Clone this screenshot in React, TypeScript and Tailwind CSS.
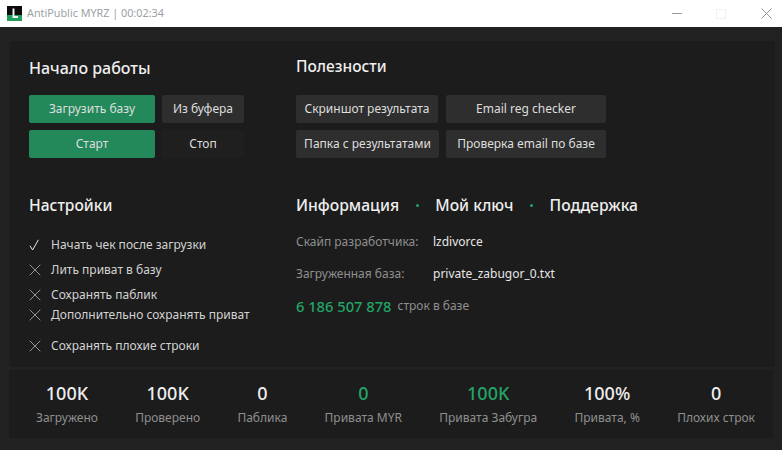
import { X } from "lucide-react";

const settings = [
  { label: "Начать чек после загрузки", on: true, className: "h-[20px] mb-[5px]" },
  { label: "Лить приват в базу", on: false, className: "h-[20px] mb-[5px]" },
  { label: "Сохранять паблик", on: false, className: "h-[20px]" },
  { label: "Дополнительно сохранять приват", on: false, className: "h-[20px] mb-[11px]" },
  { label: "Сохранять плохие строки", on: false, className: "h-[20px]" },
];

const stats = [
  { value: "100K", label: "Загружено" },
  { value: "100K", label: "Проверено" },
  { value: "0", label: "Паблика" },
  { value: "0", label: "Привата MYR", green: true },
  { value: "100K", label: "Привата Забугра", green: true },
  { value: "100%", label: "Привата, %" },
  { value: "0", label: "Плохих строк" },
];

const Btn = ({ label, className }: { label: string; className: string }) => (
  <button
    type="button"
    className={`flex h-[28px] items-center justify-center rounded-[2px] text-[12px] text-[#dedede] ${className}`}
  >
    {label}
  </button>
);

const Dot = () => <span className="h-[3px] w-[3px] rounded-full bg-[#23a566]" />;

export default function App() {
  return (
    <div className="flex h-[450px] w-[782px] flex-col overflow-hidden bg-[#212121] font-['Noto_Sans','Open_Sans',sans-serif]">
      <div className="flex h-[27px] shrink-0 items-center bg-white pl-[7px]">
        <svg width="15" height="15" viewBox="0 0 15 15" className="mr-[5px]">
          <rect width="15" height="9" fill="#0b0b0b" />
          <rect y="9" width="15" height="6" fill="#1f9d5d" />
          <path d="M5.5 2.5h2v7.5h3.5v2h-5.5z" fill="#f2f2f2" />
        </svg>
        <span className="text-[10.8px] text-[#9a9fa3]">AntiPublic MYRZ | 00:02:34</span>
        <div className="ml-auto flex items-center pr-[10px]">
          <span className="h-[1px] w-[10px] bg-[#9a9a9a]" />
          <span className="ml-[34px] h-[10px] w-[10px] border border-[#f3f3ea]" />
          <svg width="11" height="11" viewBox="0 0 11 11" className="ml-[35px]">
            <path d="M.5.5l10 10M10.5.5l-10 10" stroke="#8a8a8a" strokeWidth="0.9" fill="none" />
          </svg>
        </div>
      </div>

      <div className="ml-[10px] mr-[7px] mt-[14px] flex h-[326px] shrink-0 bg-[#1c1c1c] pl-[19px]">
        <div className="w-[267px] shrink-0">
          <h2 className="mt-[15px] text-[16px] font-medium leading-[24px] text-[#eeeeee]">Начало работы</h2>
          <div className="mt-[15px] flex gap-[7px]">
            <Btn label="Загрузить базу" className="w-[126px] bg-[#23895b]" />
            <Btn label="Из буфера" className="w-[82px] bg-[#2e2e2e]" />
          </div>
          <div className="mt-[7px] flex gap-[7px]">
            <Btn label="Старт" className="w-[126px] bg-[#23895b]" />
            <Btn label="Стоп" className="w-[82px] bg-[#1f1f1f]" />
          </div>
          <h2 className="mt-[35px] text-[15.6px] font-medium leading-[24px] text-[#eeeeee]">Настройки</h2>
          <div className="mt-[18px] flex flex-col">
            {settings.map((s) => (
              <div key={s.label} className={`flex items-center ${s.className}`}>
                {s.on ? (
                  <svg width="12" height="12" viewBox="0 0 12 12" className="text-[#e6e6e6]">
                    <path d="M1 6.8L3.6 11L9.4 0.8" stroke="currentColor" strokeWidth="1" fill="none" />
                  </svg>
                ) : (
                  <X size={20} strokeWidth={0.8} className="-ml-[4px] -mr-[4px] text-[#d0d0d0]" />
                )}
                <span className="ml-[10px] text-[12px] text-[#d2d2d2]">{s.label}</span>
              </div>
            ))}
          </div>
        </div>

        <div className="flex-1">
          <h2 className="mt-[13px] text-[15.5px] font-medium leading-[24px] text-[#eeeeee]">Полезности</h2>
          <div className="mt-[17px] flex gap-[8px]">
            <Btn label="Скриншот результата" className="w-[142px] bg-[#2e2e2e]" />
            <Btn label="Email reg checker" className="w-[160px] bg-[#2e2e2e]" />
          </div>
          <div className="mt-[7px] flex gap-[7px]">
            <Btn label="Папка с результатами" className="w-[143px] bg-[#2e2e2e]" />
            <Btn label="Проверка email по базе" className="w-[160px] bg-[#2e2e2e]" />
          </div>
          <div className="mt-[35px] flex w-[342px] items-center justify-between text-[15.7px] font-medium leading-[24px] text-[#eeeeee]">
            <span>Информация</span>
            <Dot />
            <span>Мой ключ</span>
            <Dot />
            <span>Поддержка</span>
          </div>
          <div className="mt-[15px] flex h-[20px] items-center text-[12px]">
            <span className="w-[137px] text-[#8f8f8f]">Скайп разработчика:</span>
            <span className="text-[#e6e6e6]">lzdivorce</span>
          </div>
          <div className="mt-[12px] flex h-[20px] items-center text-[12px]">
            <span className="w-[137px] text-[#8f8f8f]">Загруженная база:</span>
            <span className="text-[#e6e6e6]">private_zabugor_0.txt</span>
          </div>
          <div className="mt-[12px] flex h-[20px] items-center">
            <span className="text-[14.7px] font-medium text-[#23a566]">6 186 507 878</span>
            <span className="ml-[6px] text-[12px] text-[#8f8f8f]">строк в базе</span>
          </div>
        </div>
      </div>

      <div className="ml-[9px] mr-[9px] mt-[3px] flex h-[68px] shrink-0 justify-between bg-[#1c1c1c] pl-[27px] pr-[18px]">
        {stats.map((s) => (
          <div key={s.label} className="flex flex-col items-center pt-[11px]">
            <span className={`text-[18px] font-medium leading-[24px] ${s.green ? "text-[#23a566]" : "text-[#eeeeee]"}`}>
              {s.value}
            </span>
            <span className="mt-[3px] text-[12px] leading-[20px] text-[#8f8f8f]">{s.label}</span>
          </div>
        ))}
      </div>
    </div>
  );
}
